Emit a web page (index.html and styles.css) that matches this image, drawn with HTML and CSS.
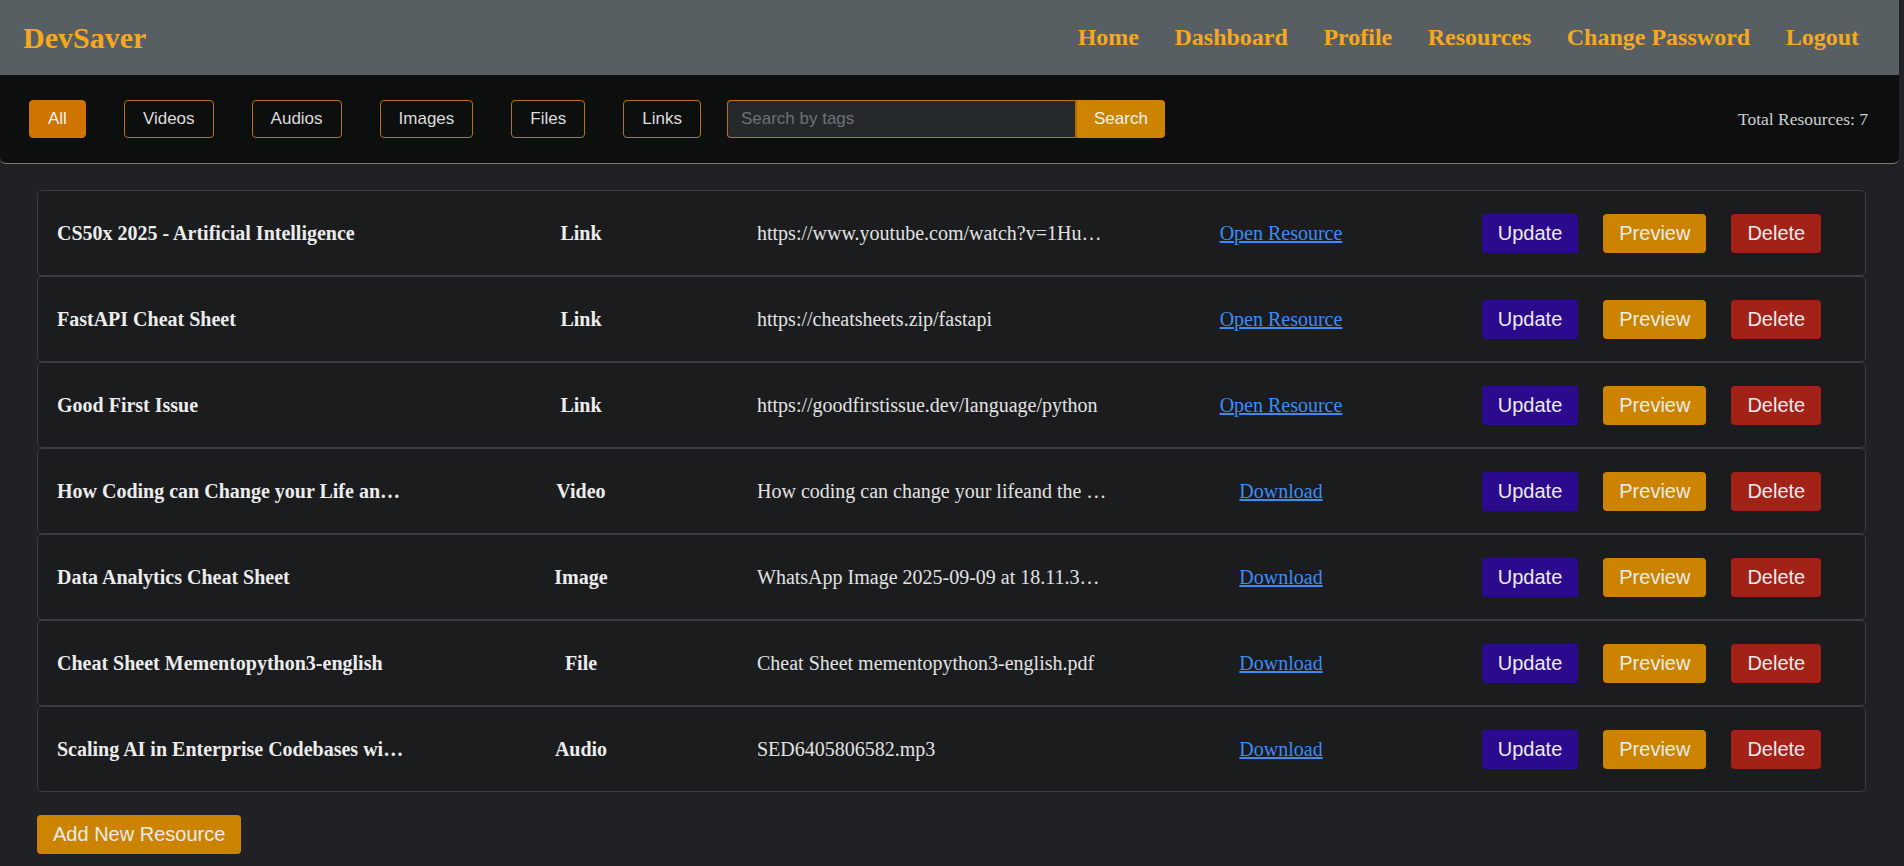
FILE: index.html
```html
<!DOCTYPE html>
<html lang="en">
<head>
<meta charset="utf-8">
<title>DevSaver - Resources</title>
<link rel="stylesheet" href="styles.css">
</head>
<body>
<header class="topbar">
  <a class="logo" href="#">DevSaver</a>
  <nav class="nav">
    <a href="#">Home</a>
    <a href="#">Dashboard</a>
    <a href="#">Profile</a>
    <a href="#">Resources</a>
    <a href="#">Change Password</a>
    <a href="#">Logout</a>
  </nav>
</header>

<section class="filterbar">
  <div class="filters">
    <button class="fbtn active">All</button>
    <button class="fbtn">Videos</button>
    <button class="fbtn">Audios</button>
    <button class="fbtn">Images</button>
    <button class="fbtn">Files</button>
    <button class="fbtn">Links</button>
  </div>
  <form class="search">
    <input class="search-input" type="text" placeholder="Search by tags">
    <button class="search-btn" type="button">Search</button>
  </form>
  <div class="total">Total Resources: 7</div>
</section>

<main class="main">
  <div class="list">
    <div class="row">
      <div class="c-title">CS50x 2025 - Artificial Intelligence</div>
      <div class="c-type">Link</div>
      <div class="c-src">https://www.youtube.com/watch?v=1Hu…</div>
      <div class="c-open"><a href="#">Open Resource</a></div>
      <div class="c-actions"><button class="b upd">Update</button><button class="b prev">Preview</button><button class="b del">Delete</button></div>
    </div>
    <div class="row">
      <div class="c-title">FastAPI Cheat Sheet</div>
      <div class="c-type">Link</div>
      <div class="c-src">https://cheatsheets.zip/fastapi</div>
      <div class="c-open"><a href="#">Open Resource</a></div>
      <div class="c-actions"><button class="b upd">Update</button><button class="b prev">Preview</button><button class="b del">Delete</button></div>
    </div>
    <div class="row">
      <div class="c-title">Good First Issue</div>
      <div class="c-type">Link</div>
      <div class="c-src">https://goodfirstissue.dev/language/python</div>
      <div class="c-open"><a href="#">Open Resource</a></div>
      <div class="c-actions"><button class="b upd">Update</button><button class="b prev">Preview</button><button class="b del">Delete</button></div>
    </div>
    <div class="row">
      <div class="c-title">How Coding can Change your Life an…</div>
      <div class="c-type">Video</div>
      <div class="c-src">How coding can change your lifeand the …</div>
      <div class="c-open"><a href="#">Download</a></div>
      <div class="c-actions"><button class="b upd">Update</button><button class="b prev">Preview</button><button class="b del">Delete</button></div>
    </div>
    <div class="row">
      <div class="c-title">Data Analytics Cheat Sheet</div>
      <div class="c-type">Image</div>
      <div class="c-src">WhatsApp Image 2025-09-09 at 18.11.3…</div>
      <div class="c-open"><a href="#">Download</a></div>
      <div class="c-actions"><button class="b upd">Update</button><button class="b prev">Preview</button><button class="b del">Delete</button></div>
    </div>
    <div class="row">
      <div class="c-title">Cheat Sheet Mementopython3-english</div>
      <div class="c-type">File</div>
      <div class="c-src">Cheat Sheet mementopython3-english.pdf</div>
      <div class="c-open"><a href="#">Download</a></div>
      <div class="c-actions"><button class="b upd">Update</button><button class="b prev">Preview</button><button class="b del">Delete</button></div>
    </div>
    <div class="row">
      <div class="c-title">Scaling AI in Enterprise Codebases wi…</div>
      <div class="c-type">Audio</div>
      <div class="c-src">SED6405806582.mp3</div>
      <div class="c-open"><a href="#">Download</a></div>
      <div class="c-actions"><button class="b upd">Update</button><button class="b prev">Preview</button><button class="b del">Delete</button></div>
    </div>
  </div>
  <button class="b prev add">Add New Resource</button>
</main>
</body>
</html>
```

FILE: styles.css
```css
html {
  background: #202124;
}
body {
  margin: 0 5px 0 0;
  background: #202124;
  font-family: "Liberation Serif", "Times New Roman", serif;
  color: #e8e8e8;
  min-height: 866px;
}

.topbar {
  display: flex;
  align-items: center;
  justify-content: space-between;
  height: 75px;
  padding: 0 40px 0 23px;
  background: #575f63;
}
.logo {
  font-size: 30px;
  font-weight: bold;
  color: #f6a821;
  text-decoration: none;
}
.nav {
  display: flex;
  gap: 35.5px;
}
.nav a {
  font-size: 24px;
  font-weight: bold;
  color: #f6a821;
  text-decoration: none;
}

.filterbar {
  display: flex;
  align-items: center;
  padding: 25px 31px 25px 29px;
  background: #0d0f0f;
  border-bottom: 1px solid #857a66;
  border-radius: 0 0 6px 6px;
}
.filters {
  display: flex;
  gap: 38px;
}
.fbtn {
  height: 38px;
  padding: 0 18px;
  font-family: "Liberation Sans", Arial, sans-serif;
  font-size: 17px;
  color: #dcdcdc;
  background: transparent;
  border: 1px solid #b8740c;
  border-radius: 4px;
}
.fbtn.active {
  background: #d07400;
  border-color: #d07400;
  color: #f2f2f2;
}
.search {
  display: flex;
  margin: 0 0 0 26px;
}
.search-input {
  box-sizing: border-box;
  width: 350px;
  height: 38px;
  padding: 0 13px;
  font-family: "Liberation Sans", Arial, sans-serif;
  font-size: 17px;
  color: #ddd;
  background: #26292b;
  border: 1px solid #c07400;
  border-right: 2px solid #b86a00;
  border-radius: 4px 0 0 4px;
  outline: none;
}
.search-input::placeholder {
  color: #6d7174;
}
.search-btn {
  box-sizing: border-box;
  width: 88px;
  height: 38px;
  font-family: "Liberation Sans", Arial, sans-serif;
  font-size: 17px;
  color: #f2f2f2;
  background: #cc8400;
  border: none;
  border-radius: 0 4px 4px 0;
}
.total {
  margin-left: auto;
  font-size: 17.5px;
  color: #cfcfcf;
}

.main {
  padding: 26px 33px 0 37px;
}
.list {
  display: flex;
  flex-direction: column;
}
.row {
  display: grid;
  grid-template-columns: 387px 312px 383px 322px 1fr;
  align-items: center;
  box-sizing: border-box;
  height: 86px;
  background: #1b1c1e;
  border: 1px solid #3b3e41;
  border-radius: 5px;
  font-size: 20px;
}
.c-title {
  padding: 0 20px 0 19px;
  font-weight: bold;
  color: #ececec;
  white-space: nowrap;
  overflow: hidden;
}
.c-type {
  text-align: center;
  font-weight: bold;
  color: #ececec;
}
.c-src {
  padding: 0 20px;
  color: #e2e2e2;
  white-space: nowrap;
  overflow: hidden;
}
.c-open {
  text-align: center;
}
.c-open a {
  color: #3b8cf5;
  text-decoration: underline;
}
.c-actions {
  display: flex;
  justify-content: center;
  gap: 25px;
  padding-right: 4px;
}
.b {
  height: 39px;
  padding: 0 16px;
  font-family: "Liberation Sans", Arial, sans-serif;
  font-size: 20px;
  color: #ebebeb;
  border: none;
  border-radius: 4px;
}
.upd {
  background: #2b0a8e;
  border-radius: 3px;
}
.prev {
  background: #cc8400;
}
.del {
  background: #a32218;
}
.add {
  margin-top: 23px;
}
```
